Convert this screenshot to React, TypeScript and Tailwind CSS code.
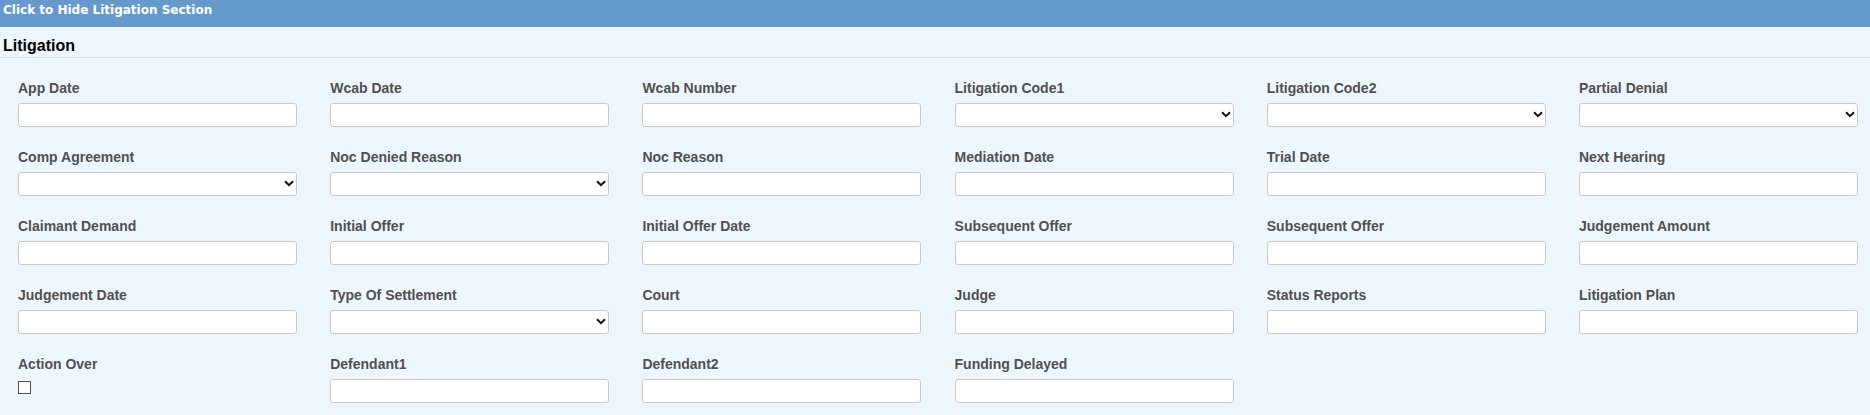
import React from "react";

type Field = { label: string; kind: "text" | "select" | "check" };

const fields: Field[] = [
  { label: "App Date", kind: "text" },
  { label: "Wcab Date", kind: "text" },
  { label: "Wcab Number", kind: "text" },
  { label: "Litigation Code1", kind: "select" },
  { label: "Litigation Code2", kind: "select" },
  { label: "Partial Denial", kind: "select" },
  { label: "Comp Agreement", kind: "select" },
  { label: "Noc Denied Reason", kind: "select" },
  { label: "Noc Reason", kind: "text" },
  { label: "Mediation Date", kind: "text" },
  { label: "Trial Date", kind: "text" },
  { label: "Next Hearing", kind: "text" },
  { label: "Claimant Demand", kind: "text" },
  { label: "Initial Offer", kind: "text" },
  { label: "Initial Offer Date", kind: "text" },
  { label: "Subsequent Offer", kind: "text" },
  { label: "Subsequent Offer", kind: "text" },
  { label: "Judgement Amount", kind: "text" },
  { label: "Judgement Date", kind: "text" },
  { label: "Type Of Settlement", kind: "select" },
  { label: "Court", kind: "text" },
  { label: "Judge", kind: "text" },
  { label: "Status Reports", kind: "text" },
  { label: "Litigation Plan", kind: "text" },
  { label: "Action Over", kind: "check" },
  { label: "Defendant1", kind: "text" },
  { label: "Defendant2", kind: "text" },
  { label: "Funding Delayed", kind: "text" },
];

function Control({ kind }: { kind: Field["kind"] }) {
  if (kind === "check") {
    return (
      <input
        type="checkbox"
        className="mt-[9px] block h-[13px] w-[13px] appearance-none border border-[#555] bg-white"
      />
    );
  }
  if (kind === "select") {
    return (
      <div className="relative mt-[7px] h-[24px] w-[279px]">
        <select className="h-full w-full appearance-none rounded-[3px] border border-[#c9c9c9] bg-white" />
        <svg
          className="pointer-events-none absolute right-[3px] top-[8px]"
          width="10"
          height="7"
          viewBox="0 0 10 7"
        >
          <path d="M1 1.2 L5 5.2 L9 1.2" fill="none" stroke="#111" strokeWidth="2" />
        </svg>
      </div>
    );
  }
  return (
    <input
      type="text"
      className="mt-[7px] block h-[24px] w-[279px] rounded-[3px] border border-[#c9c9c9] bg-white"
    />
  );
}

export default function App() {
  return (
    <div className="h-[415px] w-[1870px] overflow-hidden bg-[#eef6fd]">
      <div className="h-[27px] bg-[#6699cc] px-[3px] pt-[3px] font-['DejaVu_Sans',sans-serif] text-[12px] font-bold leading-[14px] text-white">
        Click to Hide Litigation Section
      </div>
      <div className="border-b border-[#dbe2ea] px-[3px] pt-[10px] pb-[2px] font-['Liberation_Sans',Arial,sans-serif] text-[16px] font-bold leading-[18px] text-black">
        Litigation
      </div>
      <div className="grid grid-cols-[repeat(6,312.2px)] gap-y-[22px] px-[3px] pt-[22px] font-['Liberation_Sans',Arial,sans-serif]">
        {fields.map((f, i) => (
          <div key={i} className="pl-[15px]">
            <div className="h-[16px] text-[14px] font-bold leading-[16px] text-[#505050]">{f.label}</div>
            <Control kind={f.kind} />
          </div>
        ))}
      </div>
    </div>
  );
}
